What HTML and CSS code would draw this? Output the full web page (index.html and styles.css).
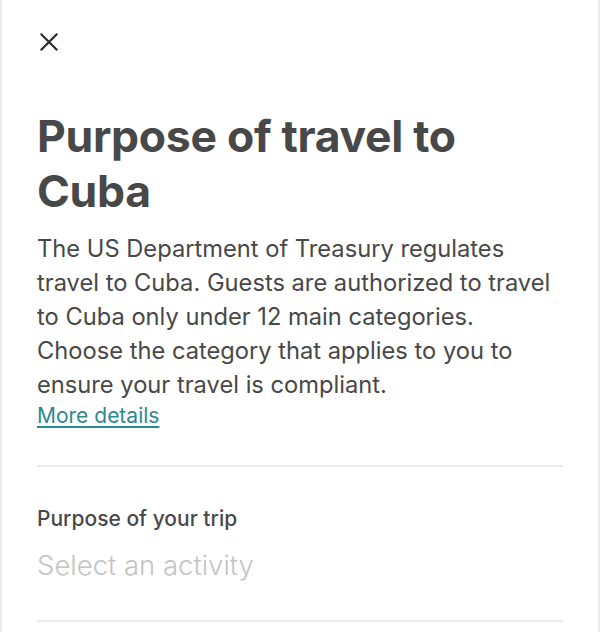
FILE: index.html
```html
<!DOCTYPE html>
<html lang="en">
<head>
    <meta charset="UTF-8">
    <meta name="viewport" content="width=device-width, initial-scale=1.0">
    <title>Purpose of travel to Cuba</title>
    <link rel="stylesheet" href="styles.css">
</head>
<body>
    <div class="sheet">
        <button class="close" aria-label="Close">
            <svg width="18" height="18" viewBox="0 0 18 18" fill="none" stroke="#2b2b2b" stroke-width="2.2" stroke-linecap="square">
                <path d="M1.5 1.5 L16.5 16.5 M16.5 1.5 L1.5 16.5"/>
            </svg>
        </button>

        <h1 class="title">Purpose of travel to Cuba</h1>
        <p class="intro">The US Department of Treasury regulates travel to Cuba. Guests are authorized to travel to Cuba only under 12 main categories. Choose the category that applies to you to ensure your travel is compliant.</p>
        <a class="more" href="#">More details</a>

        <div class="field">
            <label class="field-label" for="activity">Purpose of your trip</label>
            <div class="field-value" id="activity">Select an activity</div>
        </div>
    </div>
</body>
</html>
```

FILE: styles.css
```css
body {
    margin: 0;
    background-color: #ffffff;
    font-family: 'Inter', 'Roboto', sans-serif;
    color: #484848;
}
.sheet {
    min-height: 632px;
    box-sizing: border-box;
    border-left: 2px solid #ececec;
    border-right: 2px solid #ececec;
    padding: 33px 35px 0 35px;
}
.close {
    display: block;
    background: none;
    border: none;
    padding: 0;
    margin-left: 3px;
    width: 18px;
    height: 18px;
    cursor: pointer;
}
.close svg {
    display: block;
}
.title {
    margin: 58px 0 0 0;
    font-size: 44.5px;
    line-height: 55px;
    font-weight: 700;
    letter-spacing: -0.3px;
    color: #484848;
}
.intro {
    margin: 13px 0 0 0;
    font-size: 23.7px;
    line-height: 34px;
    font-weight: 400;
}
.more {
    display: inline-block;
    font-size: 21px;
    line-height: 28px;
    color: #2b8a8f;
    text-decoration: underline;
    text-underline-offset: 3px;
}
.field {
    margin-top: 35px;
    border-top: 2px solid #ebebeb;
    border-bottom: 2px solid #ebebeb;
    padding: 39px 0 39px 0;
}
.field-label {
    display: block;
    font-size: 21px;
    line-height: 26px;
    font-weight: 500;
    color: #484848;
}
.field-value {
    margin-top: 17px;
    font-size: 27.5px;
    line-height: 32px;
    font-weight: 300;
    color: #c4c4c4;
}
```
